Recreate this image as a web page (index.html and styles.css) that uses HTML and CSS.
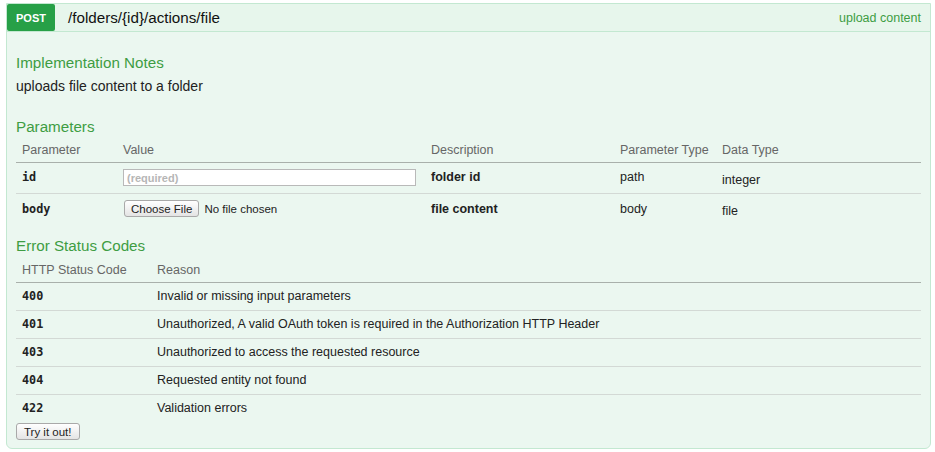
FILE: index.html
```html
<!DOCTYPE html>
<html lang="en">
<head>
<meta charset="utf-8">
<title>POST /folders/{id}/actions/file</title>
<link rel="stylesheet" href="styles.css">
</head>
<body>
<div class="operation">
  <div class="heading">
    <span class="method">POST</span>
    <span class="path">/folders/{id}/actions/file</span>
    <span class="summary">upload content</span>
  </div>
  <div class="content">
    <h4 class="notes-title">Implementation Notes</h4>
    <p class="notes">uploads file content to a folder</p>

    <h4 class="section-title">Parameters</h4>
    <table class="params">
      <thead>
        <tr>
          <th class="c-param">Parameter</th>
          <th class="c-value">Value</th>
          <th class="c-desc">Description</th>
          <th class="c-ptype">Parameter Type</th>
          <th class="c-dtype">Data Type</th>
        </tr>
      </thead>
      <tbody>
        <tr class="row-id">
          <td class="code">id</td>
          <td><input class="required" type="text" placeholder="(required)"></td>
          <td class="strong">folder id</td>
          <td>path</td>
          <td class="dtype">integer</td>
        </tr>
        <tr class="row-body">
          <td class="code">body</td>
          <td><input class="file" type="file"></td>
          <td class="strong">file content</td>
          <td>body</td>
          <td class="dtype">file</td>
        </tr>
      </tbody>
    </table>

    <h4 class="section-title errors-title">Error Status Codes</h4>
    <table class="errors">
      <thead>
        <tr>
          <th class="c-code">HTTP Status Code</th>
          <th>Reason</th>
        </tr>
      </thead>
      <tbody>
        <tr><td class="code">400</td><td>Invalid or missing input parameters</td></tr>
        <tr><td class="code">401</td><td>Unauthorized, A valid OAuth token is required in the Authorization HTTP Header</td></tr>
        <tr><td class="code">403</td><td>Unauthorized to access the requested resource</td></tr>
        <tr><td class="code">404</td><td>Requested entity not found</td></tr>
        <tr><td class="code">422</td><td>Validation errors</td></tr>
      </tbody>
    </table>

    <button class="try" type="button">Try it out!</button>
  </div>
</div>
</body>
</html>
```

FILE: styles.css
```css
* {
  box-sizing: border-box;
}

html, body {
  margin: 0;
  padding: 0;
  background: #ffffff;
}

body {
  font-family: "Liberation Sans", Arial, Helvetica, sans-serif;
  color: #222;
}

.operation {
  width: 925px;
  margin: 3px 0 0 6px;
  border: 1px solid #c3e8d1;
  border-radius: 0 0 6px 6px;
  background: #ebf7f0;
}

.heading {
  display: flex;
  align-items: center;
  height: 28px;
  background: #e7f6ec;
  border-bottom: 1px solid #c3e8d1;
}

.method {
  width: 48px;
  height: 27px;
  display: flex;
  align-items: center;
  justify-content: center;
  background: #27a047;
  color: #fff;
  font-size: 11px;
  font-weight: bold;
  border-radius: 2px;
}

.path {
  margin-left: 13px;
  font-size: 15.2px;
  color: #111;
}

.summary {
  margin-left: auto;
  margin-right: 9px;
  font-size: 12.5px;
  color: #3e9d43;
}

.content {
  padding: 0 9px 8px 9px;
}

h4 {
  margin: 0;
  font-weight: normal;
  font-size: 15.2px;
  line-height: 20px;
  color: #3e9d43;
}

.notes-title {
  padding-top: 21px;
}

.notes {
  margin: 5px 0 0 0;
  font-size: 14px;
  line-height: 16px;
  color: #222;
}

.section-title {
  margin-top: 23px;
}

.errors-title {
  margin-top: 11px;
}

table {
  width: 100%;
  border-collapse: separate;
  border-spacing: 0;
  margin-top: 2px;
  font-size: 12.5px;
  line-height: 15px;
}

th {
  text-align: left;
  font-weight: normal;
  color: #666;
  padding: 4px 6px;
  border-bottom: 1px solid #a9b0ab;
}

td {
  padding: 6px 6px;
  color: #222;
  vertical-align: middle;
  border-bottom: 1px solid #d3d9d5;
}

tbody tr:last-child td {
  border-bottom: none;
}

.c-param { width: 101px; }
.c-value { width: 308px; }
.c-desc { width: 189px; }
.c-ptype { width: 102px; }

.errors th {
  padding: 5px 6px 4px;
}

.c-code { width: 135px; }

.code {
  font-family: "DejaVu Sans Mono", "Liberation Mono", monospace;
  font-weight: bold;
  font-size: 11.8px;
  color: #222;
}

.strong {
  font-weight: bold;
}

.dtype {
  padding-top: 9px;
}

.row-id td {
  padding-top: 6px;
  padding-bottom: 7px;
}

.row-body td {
  padding-top: 6px;
  padding-bottom: 7px;
}

.row-id td.dtype,
.row-body td.dtype {
  padding-top: 9px;
  padding-bottom: 5px;
}

input.required {
  display: block;
  width: 293px;
  height: 17px;
  margin: 0;
  padding: 0 3px;
  border: 1px solid #b9b9b9;
  background: #fff;
  font-family: "Liberation Sans", Arial, sans-serif;
  font-size: 11px;
  font-weight: bold;
}

input.required::placeholder {
  color: #b6b6b6;
}

input.file {
  display: block;
  margin: 0 0 0 1px;
  height: 18px;
  font-family: "Liberation Sans", Arial, sans-serif;
  font-size: 11.5px;
  color: #222;
}

input.file::file-selector-button {
  height: 17px;
  margin: 0 5px 0 0;
  padding: 0 6px;
  font-family: "Liberation Sans", Arial, sans-serif;
  font-size: 11.5px;
  color: #222;
  border: 1px solid #a9a9a9;
  border-radius: 3px;
  background: linear-gradient(#ffffff, #e4e4e4);
}

.try {
  display: block;
  margin: 1px 0 0 0;
  height: 17px;
  padding: 0 7px;
  font-family: "Liberation Sans", Arial, sans-serif;
  font-size: 11.5px;
  color: #222;
  border: 1px solid #a9a9a9;
  border-radius: 3px;
  background: linear-gradient(#ffffff, #e4e4e4);
}
```
